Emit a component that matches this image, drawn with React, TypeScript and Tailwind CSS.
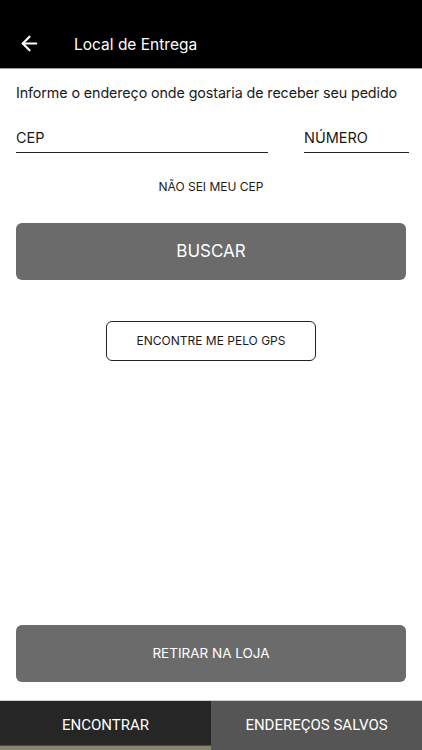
import { ArrowLeft } from "lucide-react";

const App = () => {
  return (
    <div
      className="w-[422px] h-[750px] bg-white flex flex-col overflow-hidden"
      style={{ fontFamily: "Inter, 'Open Sans', sans-serif" }}
    >
      {/* Header */}
      <div className="h-[69px] bg-black border-b border-[#9a9a9a] flex items-end pb-[13px] pl-[18px]">
        <ArrowLeft className="w-[23px] h-[23px] text-white" strokeWidth={2.3} />
        <span className="ml-[33px] text-white text-[15.5px] leading-5">Local de Entrega</span>
      </div>

      <div className="flex-1 flex flex-col px-4">
        <p className="mt-[14px] text-[14.3px] text-[#1a1a1a] leading-5 tracking-[-0.1px]">
          Informe o endereço onde gostaria de receber seu pedido
        </p>

        {/* Inputs */}
        <div className="mt-[22px] flex justify-between -mr-[3px]">
          <div className="w-[252px] border-b-[1.5px] border-[#222] pb-[3px]">
            <span className="text-[14.5px] text-[#1a1a1a] leading-5">CEP</span>
          </div>
          <div className="w-[105px] border-b-[1.5px] border-[#222] pb-[3px]">
            <span className="text-[14.5px] text-[#1a1a1a] leading-5">NÚMERO</span>
          </div>
        </div>

        <div className="mt-[26px] text-center text-[12px] text-[#1a1a1a] leading-4">
          NÃO SEI MEU CEP
        </div>

        <button className="mt-[28px] h-[57px] rounded-[6px] bg-[#6b6b6b] text-white text-[17px]">
          BUSCAR
        </button>

        <div className="mt-[41px] flex justify-center">
          <button className="w-[210px] h-[40px] rounded-[6px] border border-[#222] text-[12px] text-[#1a1a1a]">
            ENCONTRE ME PELO GPS
          </button>
        </div>

        <div className="flex-1" />

        <button className="mb-[18px] h-[57px] rounded-[6px] bg-[#6b6b6b] text-white text-[13.5px]">
          RETIRAR NA LOJA
        </button>
      </div>

      {/* Bottom tabs */}
      <div className="h-[50px] flex border-t border-[#cfcfcf]" style={{ fontFamily: "Roboto, sans-serif" }}>
        <div className="w-[211px] bg-[#262626] flex flex-col">
          <div className="flex-1 flex items-center justify-center pt-[4px] text-white text-[15px]">ENCONTRAR</div>
          <div className="h-[1px] bg-[#4a4a40]" />
          <div className="h-[4px] bg-[#8b8570]" />
        </div>
        <div className="flex-1 bg-[#555555] flex items-center justify-center text-white text-[15px]">
          ENDEREÇOS SALVOS
        </div>
      </div>
    </div>
  );
};

export default App;
